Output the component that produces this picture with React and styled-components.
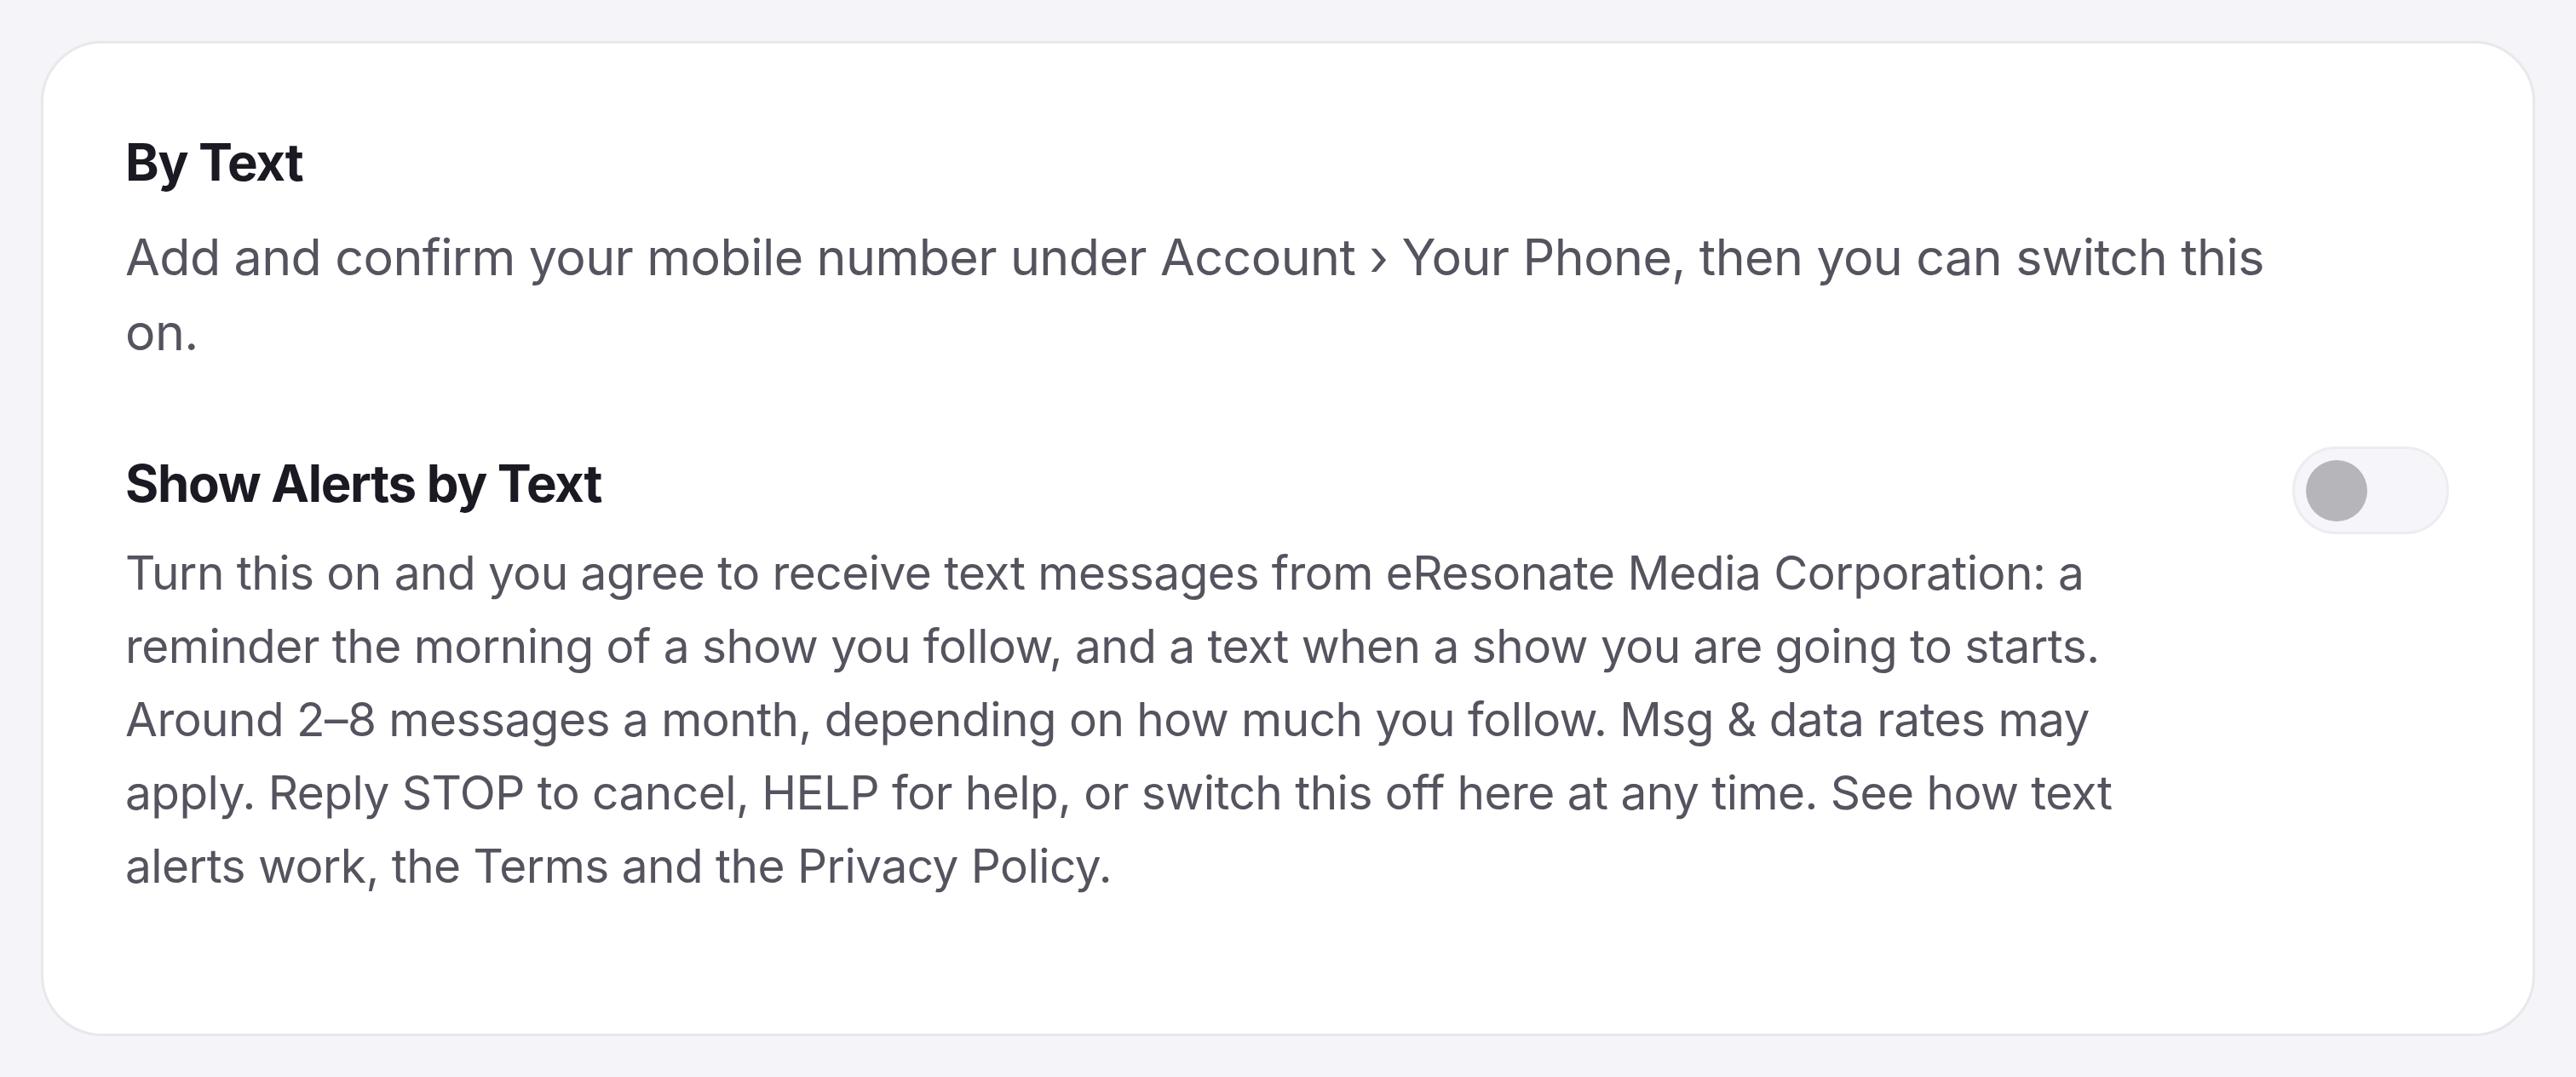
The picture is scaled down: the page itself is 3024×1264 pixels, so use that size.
import styled, { createGlobalStyle } from 'styled-components';

const GlobalStyle = createGlobalStyle`
  html, body {
    margin: 0;
    padding: 0;
    background: #f4f4f9;
  }
  body {
    font-family: Inter, "Noto Sans", sans-serif;
  }
`;

const Page = styled.div`
  padding: 48px;
`;

const Card = styled.section`
  display: flex;
  flex-direction: column;
  gap: 94px;
  background: #ffffff;
  border: 3px solid #e8e8ec;
  border-radius: 72px;
  padding: 100px 98px 154px 96px;
`;

const Setting = styled.div`
  display: flex;
  align-items: flex-start;
  justify-content: space-between;
  gap: 120px;
`;

const Text = styled.div`
  display: flex;
  flex-direction: column;
  gap: ${(p) => p.$gap}px;
  max-width: ${(p) => p.$max}px;
`;

const Title = styled.h3`
  margin: 0;
  font-size: 60px;
  line-height: 78px;
  font-weight: 700;
  letter-spacing: -0.022em;
  color: #1b1a22;
`;

const Description = styled.p`
  margin: 0;
  font-size: ${(p) => (p.$lead ? 59.2 : 55)}px;
  line-height: ${(p) => (p.$lead ? 88 : 86)}px;
  font-weight: 400;
  letter-spacing: -0.01em;
  color: #56535f;
`;

const Track = styled.button`
  flex: none;
  display: flex;
  align-items: center;
  width: 184px;
  height: 103px;
  padding: 0 13px;
  margin-top: -4px;
  border: 3px solid #ececf1;
  border-radius: 999px;
  background: #f5f5fa;
  cursor: pointer;
`;

const Knob = styled.span`
  width: 72px;
  height: 72px;
  border-radius: 50%;
  background: #b5b5ba;
`;

export default function App() {
  return (
    <>
      <GlobalStyle />
      <Page>
        <Card>
          <Setting>
            <Text $max={2580} $gap={29}>
              <Title>By Text</Title>
              <Description $lead>
                Add and confirm your mobile number under Account › Your Phone, then you can switch this on.
              </Description>
            </Text>
          </Setting>
          <Setting>
            <Text $max={2420} $gap={23}>
              <Title>Show Alerts by Text</Title>
              <Description>
                Turn this on and you agree to receive text messages from eResonate Media Corporation: a
                reminder the morning of a show you follow, and a text when a show you are going to starts.
                Around 2–8 messages a month, depending on how much you follow. Msg &amp; data rates may
                apply. Reply STOP to cancel, HELP for help, or switch this off here at any time. See how
                text alerts work, the Terms and the Privacy Policy.
              </Description>
            </Text>
            <Track type="button" role="switch" aria-checked="false" aria-label="Show Alerts by Text">
              <Knob />
            </Track>
          </Setting>
        </Card>
      </Page>
    </>
  );
}
